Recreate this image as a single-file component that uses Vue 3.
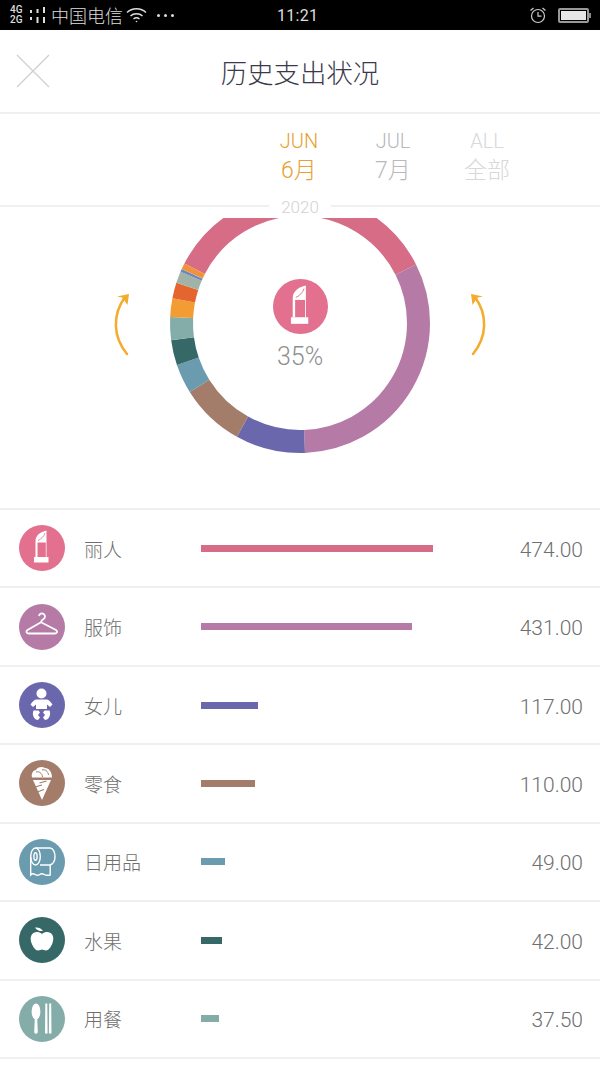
<template>
  <div class="page">
    <div class="status">
      <div class="status-left">
        <div class="net"><span>4G</span><span>2G</span></div>
        <svg class="signal" width="16" height="18" viewBox="0 0 16 18">
          <path d="M0 4h2v3H0zM0 11h2v3H0zM6.500 3h2v4h-2zM6.500 11h2v6h-2zM13 1h2v6h-2zM13 11h2v6h-2z" fill="#ddd" />
        </svg>
        <span class="carrier">中国电信</span>
        <svg class="wifi" width="22" height="18" viewBox="0 0 22 18" fill="none" stroke="#ddd" stroke-width="1.500">
          <path d="M1 6.500c5-5 14-5 19 0" />
          <path d="M4.500 10c3-3 9-3 12 0" />
          <path d="M7.500 13c1.800-1.500 4.200-1.500 6 0" />
          <circle cx="10.500" cy="15.500" r="0.800" fill="#ddd" stroke="none" />
        </svg>
        <div class="dots"><i></i><i></i><i></i></div>
      </div>
      <span class="time">11:21</span>
      <div class="status-right">
        <svg width="18" height="18" viewBox="0 0 18 18" fill="none" stroke="#ccc" stroke-width="1.200">
          <circle cx="9" cy="10" r="6.500" />
          <path d="M9 6v4.200h3.500M1.500 4.500l3-2.500M16.500 4.500l-3-2.500" />
        </svg>
        <div class="battery"><div class="battery-fill"></div></div>
      </div>
    </div>

    <header class="header">
      <svg class="close" width="34" height="34" viewBox="0 0 34 34" stroke="#d0d0d0" stroke-width="1.300">
        <path d="M1 1l32 32M33 1L1 33" />
      </svg>
      <h1 class="title">历史支出状况</h1>
    </header>

    <nav class="tabs">
      <div v-for="tab in tabs" :key="tab.en" class="tab" :class="tab.state">
        <span class="tab-en">{{ tab.en }}</span>
        <span class="tab-zh">{{ tab.zh }}</span>
      </div>
    </nav>

    <section class="chart">
      <span class="year">2020</span>
      <svg class="donut" width="600" height="301" viewBox="0 0 600 301">
        <defs>
          <clipPath id="ring-clip"><rect x="0" y="11" width="600" height="290" /></clipPath>
        </defs>
        <g clip-path="url(#ring-clip)" fill="none" stroke-width="23">
          <path v-for="seg in segments" :key="seg.from" :d="seg.d" :stroke="seg.color" />
        </g>
        <g fill="none" stroke="#f5ab2e" stroke-width="2.500" stroke-linecap="round">
          <path d="M127 147C113 130 112 108 125 90" />
          <path d="M473 147C487 130 488 108 475 90" />
        </g>
        <path d="M129 87l-12 2.500 5 1 2 2.500 3.500 5z" fill="#f5ab2e" />
        <path d="M471 87l12 2.500-5 1-2 2.500-3.500 5z" fill="#f5ab2e" />
      </svg>
      <div class="center">
        <svg class="center-icon" viewBox="0 0 46 46">
          <circle cx="23" cy="23" r="23" fill="#e2708e" />
          <path d="M16.500 32V16C16.500 10.500 21 7 27.500 5.500V32Z" fill="#fff" />
          <path d="M18.500 17.500h8.300V32h-8.300z" fill="#e2708e" />
          <path d="M19 15.500c3-1.500 6-4 7-7.500" fill="none" stroke="#e2708e" stroke-width="0.800" />
          <path d="M15 32h14.500v5.500H15z" fill="#fff" />
        </svg>
        <span class="percent">35%</span>
      </div>
    </section>

    <ul class="list">
      <li v-for="row in rows" :key="row.name" class="row">
        <svg class="row-icon" viewBox="0 0 46 46">
          <circle cx="23" cy="23" r="23" :fill="row.iconColor" />
          <g v-if="row.icon === 'lipstick'">
            <path d="M16.500 32V16C16.500 10.500 21 7 27.500 5.500V32Z" fill="#fff" />
            <path d="M18.500 17.500h8.300V32h-8.300z" :fill="row.iconColor" />
            <path d="M19 15.500c3-1.500 6-4 7-7.500" fill="none" :stroke="row.iconColor" stroke-width="0.800" />
            <path d="M15 32h14.500v5.500H15z" fill="#fff" />
          </g>
          <path v-else-if="row.icon === 'hanger'" d="M20 12a3 3 0 1 1 4.500 3c-1.500 1-2.500 2-2.500 3.300L8.500 26c-2 1.500-1 3.500 1 3.500H36c2 0 3-2 1-3.500L22 18.300" fill="none" stroke="#fff" stroke-width="1.800" stroke-linejoin="round" />
          <g v-else-if="row.icon === 'baby'" fill="#fff">
            <circle cx="22.500" cy="11.500" r="5" />
            <path d="M17.500 17.500h10c2 0 3.500 1.500 6 5l-2.500 2.500-3-2.500V27h-11v-4.500l-3 2.500-2.500-2.500c2.500-3.500 4-5 6-5z" />
            <path d="M14.500 28.500h5l1.500 2-2 2.500 2 2.500-2 2.500c-3.500 0-6.500-5-4.500-9.500z" />
            <path d="M30.500 28.500h-5l-1.500 2 2 2.500-2 2.500 2 2.500c3.500 0 6.500-5 4.500-9.500z" />
          </g>
          <g v-else-if="row.icon === 'icecream'">
            <path d="M13 17.500c-1-4 1-7 4-7.500 1-2.500 6-4 9-2 4 0 7 4 7 9.500z" fill="#fff" />
            <path d="M14 20h18L23 40z" fill="#fff" />
            <path d="M17 12c3-1 6 1 6.500 5M23 10c3-1 6 1 6.500 5M12 19h22" fill="none" :stroke="row.iconColor" stroke-width="1" />
            <path d="M16 27l7-2M18 32l7-2.500M27.500 21l-7 2" fill="none" :stroke="row.iconColor" stroke-width="1.200" />
          </g>
          <g v-else-if="row.icon === 'roll'" fill="none" stroke="#fff" stroke-width="1.400">
            <ellipse cx="16.500" cy="17.500" rx="4.800" ry="8.500" />
            <ellipse cx="16.500" cy="17.500" rx="1.600" ry="3.800" />
            <path d="M16.500 9H31c3 0 5 4 5 8.500S34 25 31 26H21" />
            <path d="M11.700 18v18c2-2 3-1.500 4.500-.5s3 1 4.500 0 3-1 4.500 0 3 1 6 .5V26" />
          </g>
          <g v-else-if="row.icon === 'apple'" fill="#fff">
            <path d="M23 17c3-2.500 6-2.500 8.500-1 3 2 3.500 6 2 10-1.500 4-4 7.500-6.500 7.500-2 0-3-1-4-1s-2 1-4 1c-2.500 0-5-3.500-6.500-7.500-1.500-4-1-8 2-10 2.500-1.500 5.500-1.500 8.500 1z" />
            <path d="M16 10.500c3-.5 6 .5 8 3.500-3 .5-6-.5-8-3.500z" />
          </g>
          <g v-else fill="#fff">
            <ellipse cx="17" cy="15.500" rx="4.400" ry="8" />
            <path d="M15.800 22h2.400l.6 14a1.800 1.800 0 0 1-3.600 0z" />
            <path d="M26.300 7.500h2l.3 30h-2.600zM30.200 7.500h2l.3 30h-2.600z" />
          </g>
        </svg>
        <span class="row-name">{{ row.name }}</span>
        <div class="row-track">
          <div class="row-bar" :style="{ width: row.value * barScale + 'px', background: row.barColor }"></div>
        </div>
        <span class="row-value">{{ row.value.toFixed(2) }}</span>
      </li>
    </ul>
  </div>
</template>

<script setup>
import { computed } from 'vue';

const barScale = 0.489;

const tabs = [
  { en: 'JUN', zh: '6月', state: 'active' },
  { en: 'JUL', zh: '7月', state: 'idle' },
  { en: 'ALL', zh: '全部', state: 'faint' },
];

const rows = [
  { name: '丽人', value: 474, icon: 'lipstick', iconColor: '#e2708e', barColor: '#d76c87' },
  { name: '服饰', value: 431, icon: 'hanger', iconColor: '#b57aa6', barColor: '#b57aa6' },
  { name: '女儿', value: 117, icon: 'baby', iconColor: '#6a67ac', barColor: '#6a67ac' },
  { name: '零食', value: 110, icon: 'icecream', iconColor: '#a37c6a', barColor: '#a37c6a' },
  { name: '日用品', value: 49, icon: 'roll', iconColor: '#6a9bae', barColor: '#6a9bae' },
  { name: '水果', value: 42, icon: 'apple', iconColor: '#356866', barColor: '#356866' },
  { name: '用餐', value: 37.5, icon: 'cutlery', iconColor: '#84aca9', barColor: '#84aca9' },
];

// angles in degrees, clockwise from 12 o'clock
const slices = [
  { from: -62.8, to: 63.2, color: '#d76c87' },
  { from: 63.2, to: 177.8, color: '#b57aa6' },
  { from: 177.8, to: 209, color: '#6a67ac' },
  { from: 209, to: 238, color: '#a37c6a' },
  { from: 238, to: 251.2, color: '#6a9bae' },
  { from: 251.2, to: 262.4, color: '#356866' },
  { from: 262.4, to: 272.7, color: '#84aca9' },
  { from: 272.7, to: 281, color: '#f39c34' },
  { from: 281, to: 288, color: '#e56530' },
  { from: 288, to: 293.2, color: '#a0b3a6' },
  { from: 293.2, to: 294.5, color: '#6f87c0' },
  { from: 294.5, to: 297.2, color: '#f0923a' },
];

function point(deg) {
  const rad = (deg * Math.PI) / 180;
  return `${(300 + 118.5 * Math.sin(rad)).toFixed(2)} ${(116 - 118.5 * Math.cos(rad)).toFixed(2)}`;
}

const segments = computed(() =>
  slices.map((s) => ({
    ...s,
    d: `M${point(s.from)}A118.5 118.5 0 ${s.to - s.from > 180 ? 1 : 0} 1 ${point(s.to)}`,
  })),
);
</script>

<style>
html,
body {
  margin: 0;
  background: #fff;
}
</style>

<style scoped>
.page {
  width: 600px;
  height: 1067px;
  overflow: hidden;
  background: #fff;
  font-family: Roboto, "Noto Sans CJK SC", sans-serif;
  font-weight: 300;
}

.status {
  height: 30px;
  background: #000;
  color: #ddd;
  display: flex;
  align-items: center;
  justify-content: space-between;
  padding: 0 10px;
  position: relative;
}

.status-left {
  display: flex;
  align-items: center;
}

.net {
  display: flex;
  flex-direction: column;
  font-size: 10px;
  line-height: 10px;
  font-weight: 500;
  width: 20px;
}

.carrier {
  font-size: 18px;
  margin-left: 5px;
}

.wifi {
  margin-left: 3px;
}

.dots {
  display: flex;
  gap: 4px;
  margin-left: 9px;
}

.dots i {
  width: 3px;
  height: 3px;
  border-radius: 50%;
  background: #ddd;
}

.time {
  position: absolute;
  left: 277px;
  font-size: 16px;
  font-weight: 400;
  letter-spacing: 0.3px;
}

.status-right {
  display: flex;
  align-items: center;
  gap: 11px;
}

.battery {
  width: 31px;
  height: 15px;
  border: 2px solid #999;
  border-radius: 2px;
  padding: 1px;
  box-sizing: border-box;
  margin-right: 1px;
  position: relative;
}

.battery::after {
  content: "";
  position: absolute;
  right: -4px;
  top: 3px;
  width: 2px;
  height: 5px;
  background: #888;
}

.battery-fill {
  height: 100%;
  background: #e6e6e6;
}

.header {
  height: 82px;
  border-bottom: 2px solid #f0f0f0;
  display: flex;
  align-items: center;
  justify-content: center;
  position: relative;
}

.close {
  position: absolute;
  left: 16px;
  top: 24px;
}

.title {
  margin: 0;
  font-size: 26.4px;
  font-weight: 300;
  color: #3a3a4a;
}

.tabs {
  height: 91px;
  padding-left: 252px;
  display: flex;
  border-bottom: 2px solid #f0f0f0;
}

.tab {
  width: 94px;
  display: flex;
  flex-direction: column;
  align-items: center;
  padding-top: 14px;
}

.tab-en {
  font-size: 20px;
  line-height: 27px;
}

.tab-zh {
  font-size: 23px;
  line-height: 32px;
}

.active {
  color: #e8a030;
}

.idle {
  color: #b9b9b9;
}

.faint {
  color: #d8d8d8;
}

.chart {
  position: relative;
  height: 301px;
}

.year {
  position: absolute;
  left: 269px;
  top: -10px;
  width: 62px;
  text-align: center;
  background: #fff;
  color: #d5cfd2;
  font-size: 17px;
  line-height: 20px;
}

.donut {
  display: block;
}

.center {
  position: absolute;
  left: 250px;
  top: 72px;
  width: 100px;
  display: flex;
  flex-direction: column;
  align-items: center;
}

.center-icon {
  width: 55px;
  height: 55px;
}

.percent {
  margin-top: 9px;
  font-size: 25px;
  line-height: 28px;
  color: #8f8f8f;
}

.list {
  list-style: none;
  margin: 0;
  padding: 0;
  border-top: 2px solid #f0f0f0;
}

.row {
  height: 78.43px;
  box-sizing: border-box;
  border-bottom: 2px solid #f0f0f0;
  display: flex;
  align-items: center;
  padding: 0 17px 0 19px;
}

.row-icon {
  width: 46px;
  height: 46px;
  flex: none;
}

.row-name {
  width: 117px;
  margin-left: 19px;
  font-size: 19px;
  color: #6f6f6f;
}

.row-track {
  flex: 1;
}

.row-bar {
  height: 7px;
}

.row-value {
  margin-top: 3px;
  font-size: 21px;
  color: #6f6f6f;
}
</style>
